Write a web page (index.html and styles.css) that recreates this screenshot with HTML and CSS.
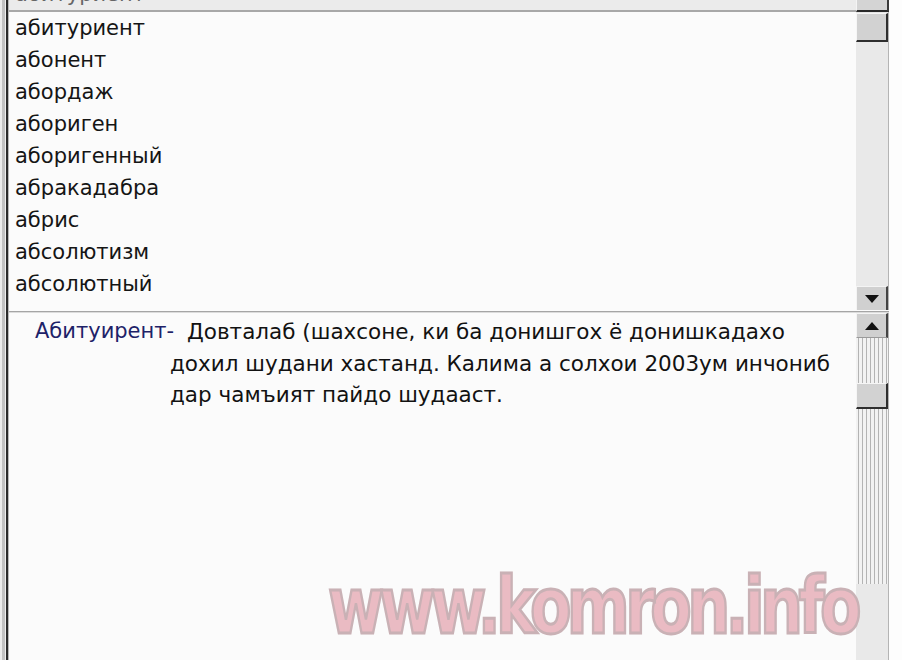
FILE: index.html
```html
<!DOCTYPE html>
<html lang="ru">
<head>
<meta charset="utf-8">
<title>Луғат</title>
<link rel="stylesheet" href="styles.css">
</head>
<body>
<div class="shell">
  <div class="edge"></div>
  <div class="panes">
    <div class="row top-row">
      <div class="edit"><span class="edit-text">абитуриент</span></div>
      <div class="top-btn"></div>
    </div>
    <div class="row list-row">
      <ul class="words">
        <li>абитуриент</li>
        <li>абонент</li>
        <li>абордаж</li>
        <li>абориген</li>
        <li>аборигенный</li>
        <li>абракадабра</li>
        <li>абрис</li>
        <li>абсолютизм</li>
        <li>абсолютный</li>
      </ul>
      <div class="vscroll">
        <div class="thumb thumb-top"></div>
        <div class="track track-plain"></div>
        <div class="arrow-btn">
          <svg width="14" height="8" viewBox="0 0 14 8"><polygon points="0,0 14,0 7,8" fill="#111"/></svg>
        </div>
      </div>
    </div>
    <div class="sep"></div>
    <div class="row detail-row">
      <div class="detail">
        <span class="term">Абитуирент-</span>
        <p class="meaning">Довталаб (шахсоне, ки ба донишгох ё донишкадахо<br>дохил шудани хастанд. Калима а солхои 2003ум инчониб<br>дар чамъият пайдо шудааст.</p>
      </div>
      <div class="vscroll">
        <div class="arrow-btn">
          <svg width="14" height="8" viewBox="0 0 14 8"><polygon points="7,0 14,8 0,8" fill="#111"/></svg>
        </div>
        <div class="track track-lines short"></div>
        <div class="thumb thumb-low"></div>
        <div class="track track-lines long"></div>
        <div class="track track-plain fill"></div>
      </div>
    </div>
  </div>
  <div class="gutter"></div>
  <div class="watermark">www.komron.info</div>
</div>
</body>
</html>
```
FILE: styles.css
```css
html, body {
  margin: 0;
  padding: 0;
  background: #fbfbfb;
}
.shell {
  position: relative;
  display: flex;
  width: 902px;
  height: 660px;
  overflow: hidden;
}
.edge {
  width: 9px;
  flex: none;
  background: linear-gradient(to right, #ececec 0 2px, #c2c2c2 2px 5px, #efefef 5px 6px, #2b2b2b 6px 8px, #b9b9b9 8px 9px);
}
.panes {
  flex: 1;
  display: flex;
  flex-direction: column;
}
.gutter {
  width: 13px;
  flex: none;
  background: #fdfdfd;
}
.row {
  display: flex;
}
.top-row {
  height: 12px;
}
.edit {
  flex: 1;
  background: #ebebeb;
  border-bottom: 2px solid #a8a8a8;
  overflow: hidden;
  padding-left: 6px;
}
.edit-text {
  display: block;
  margin-top: -19px;
  font: 21px/26px "DejaVu Sans", sans-serif;
  color: #666;
}
.top-btn {
  width: 30px;
  flex: none;
  background: #d4d4d4;
  border-right: 2px solid #3a3a3a;
  border-bottom: 2px solid #2a2a2a;
  border-left: 1px solid #f4f4f4;
}
.list-row {
  height: 298px;
}
.words {
  flex: 1;
  margin: 0;
  padding: 0 0 0 6px;
  list-style: none;
  background: #fbfbfb;
  font: 21px/32px "DejaVu Sans", sans-serif;
  color: #151515;
  overflow: hidden;
}
.vscroll {
  width: 32px;
  flex: none;
  display: flex;
  flex-direction: column;
  border-right: 1px solid #b4b4b4;
  background: #e6e6e6;
}
.thumb {
  flex: none;
  background: #d2d2d2;
  border-top: 1px solid #f6f6f6;
  border-left: 1px solid #f6f6f6;
  border-right: 2px solid #2e2e2e;
  border-bottom: 2px solid #2e2e2e;
}
.thumb-top {
  height: 26px;
  margin-top: 1px;
}
.thumb-low {
  height: 23px;
}
.track {
  flex: none;
}
.track-plain {
  background: #e9e9e9;
}
.list-row .track-plain {
  height: 244px;
}
.track-lines {
  background: repeating-linear-gradient(to right, #f2f2f2 0 2px, #b3b3b3 2px 3px, #f2f2f2 3px 4px);
}
.track-lines.short {
  height: 45px;
}
.track-lines.long {
  height: 175px;
}
.track-plain.fill {
  flex: 1;
}
.arrow-btn {
  height: 25px;
  flex: none;
  box-sizing: border-box;
  display: flex;
  align-items: center;
  justify-content: center;
  background: #d0d0d0;
  border-top: 1px solid #f4f4f4;
  border-left: 1px solid #f4f4f4;
  border-right: 2px solid #444;
  border-bottom: 1px solid #9a9a9a;
}
.sep {
  height: 3px;
  background: linear-gradient(to bottom, #fbfbfb 0 1px, #a5a5a5 1px 2px, #dcdcdc 2px 3px);
}
.detail-row {
  flex: 1;
}
.detail {
  flex: 1;
  display: flex;
  align-items: flex-start;
  padding: 3px 0 0 26px;
  background: #fbfbfb;
  font: 21.5px/31.5px "DejaVu Sans", sans-serif;
}
.term {
  color: #1e2268;
  width: 135px;
  flex: none;
  white-space: nowrap;
  font-size: 21px;
}
.meaning {
  margin: 0;
  color: #121212;
  text-indent: 17px;
  white-space: nowrap;
}
.watermark {
  position: absolute;
  left: 328px;
  top: 556px;
  font: bold 78px/100px "DejaVu Sans", sans-serif;
  letter-spacing: -6px;
  color: #eabbc3;
  -webkit-text-stroke: 3px #c9b1b5;
  white-space: nowrap;
  transform: scaleX(0.775);
  transform-origin: left top;
}
```
